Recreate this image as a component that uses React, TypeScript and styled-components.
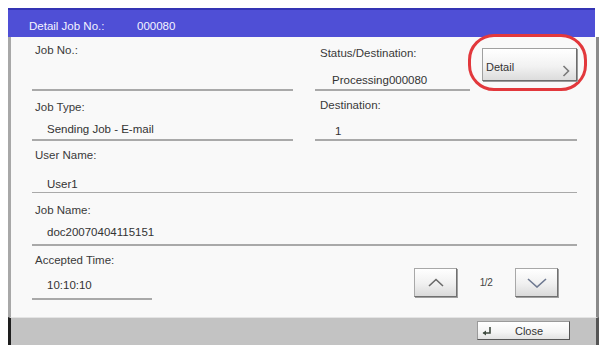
import React from 'react';
import styled, { createGlobalStyle } from 'styled-components';

const GlobalStyle = createGlobalStyle`
  html, body {
    margin: 0;
    padding: 0;
    background: #ffffff;
  }
  body {
    font-family: 'Liberation Sans', Arial, sans-serif;
    font-size: 11.5px;
    color: #3a3a3a;
  }
`;

const Page = styled.div`
  width: 601px;
  height: 345px;
  padding: 8px 2px 0 8px;
  box-sizing: border-box;
  overflow: hidden;
`;

const Frame = styled.div`
  height: 337px;
  display: flex;
  flex-direction: column;
`;

const TitleBar = styled.div`
  height: 22px;
  border-top: 2px solid #3434b4;
  background: #4f4fd6;
  color: #f4f4ff;
  display: flex;
  align-items: center;
  padding: 5px 0 0 21px;
  box-sizing: content-box;
  margin-right: 4px;
`;

const TitleLabel = styled.span`
  width: 108px;
`;

const Body = styled.div`
  flex: 1;
  background: #f9f9f9;
  border-left: 3px solid #a8a8a8;
  border-right: 3px solid #8a8a8a;
  padding: 1px 19px 0 21px;
  display: flex;
  flex-direction: column;
`;

const Row = styled.div`
  display: grid;
  grid-template-columns: 261px 1fr;
  column-gap: 22px;
`;

const FieldBox = styled.div<{ $pt: number; $gap: number; $pb: number; $line: number; $width?: number; $grow?: boolean }>`
  display: flex;
  flex-direction: column;
  padding-top: ${(p) => p.$pt}px;
  padding-bottom: ${(p) => p.$pb}px;
  border-bottom: ${(p) => p.$line}px solid #a9a9a9;
  width: ${(p) => (p.$width ? `${p.$width}px` : 'auto')};
  flex: ${(p) => (p.$grow ? '1' : 'none')};
  row-gap: ${(p) => p.$gap}px;
`;

const Label = styled.div<{ $indent: number }>`
  height: 14px;
  line-height: 14px;
  padding-left: ${(p) => p.$indent}px;
  white-space: nowrap;
`;

const Value = styled.div<{ $indent: number }>`
  height: 14px;
  line-height: 14px;
  padding-left: ${(p) => p.$indent}px;
  color: #333;
  white-space: nowrap;
`;

type FieldProps = {
  label: string;
  value?: string;
  pt: number;
  gap: number;
  pb: number;
  line?: number;
  width?: number;
  grow?: boolean;
  labelIndent?: number;
  valueIndent?: number;
};

function Field({ label, value = '', pt, gap, pb, line = 2, width, grow, labelIndent = 3, valueIndent = 15 }: FieldProps) {
  return (
    <FieldBox $pt={pt} $gap={gap} $pb={pb} $line={line} $width={width} $grow={grow}>
      <Label $indent={labelIndent}>{label}</Label>
      <Value $indent={valueIndent}>{value}</Value>
    </FieldBox>
  );
}

const StatusCell = styled.div`
  display: flex;
  align-items: flex-start;
`;

const DetailWrap = styled.div`
  position: relative;
  margin: 10px 0 0 12px;
`;

const Highlight = styled.div`
  position: absolute;
  left: -14px;
  right: -10px;
  top: -14px;
  bottom: -10px;
  border: 3px solid #e2383c;
  border-radius: 26px;
  pointer-events: none;
`;

const DetailButton = styled.button`
  position: relative;
  width: 95px;
  height: 33px;
  padding: 5px 0 0 3px;
  box-sizing: border-box;
  display: block;
  text-align: left;
  font: inherit;
  font-size: 11px;
  color: #333;
  background: linear-gradient(#ffffff, #f2f2f2 55%, #dcdcdc);
  border: 1px solid #a0a0a0;
  border-right-color: #6c6c6c;
  border-bottom-color: #6c6c6c;
  box-shadow: 1px 1px 0 #9a9a9a;
  svg {
    position: absolute;
    right: 6px;
    bottom: 3px;
  }
`;

const BottomRow = styled.div`
  display: flex;
  align-items: flex-start;
`;

const Pager = styled.div`
  margin: 22px 19px 0 auto;
  display: flex;
  align-items: center;
`;

const PageButton = styled.button`
  width: 43px;
  height: 29px;
  padding: 0;
  display: flex;
  align-items: center;
  justify-content: center;
  background: linear-gradient(#ffffff, #f0f0f0 55%, #dadada);
  border: 1px solid #a8a8a8;
  border-right-color: #707070;
  border-bottom-color: #707070;
  box-shadow: 1px 1px 0 #a0a0a0;
`;

const PageText = styled.span`
  width: 58px;
  text-align: center;
  font-size: 10px;
  letter-spacing: -0.5px;
  color: #444;
`;

const Footer = styled.div`
  height: 28px;
  box-sizing: border-box;
  background: #c3c3c3;
  border-top: 1px solid #e4e4e4;
  border-left: 3px solid #1e1e1e;
  border-right: 3px solid #555;
  display: flex;
  justify-content: flex-end;
  padding: 3px 26px 0 0;
`;

const CloseButton = styled.button`
  width: 93px;
  height: 19px;
  padding: 0 0 0 3px;
  display: flex;
  align-items: center;
  font: inherit;
  font-size: 11px;
  color: #333;
  background: linear-gradient(#ffffff, #f4f4f4 60%, #e2e2e2);
  border: 1px solid #9a9a9a;
  border-right-color: #555;
  border-bottom-color: #555;
  span {
    flex: 1;
    text-align: center;
    padding-right: 4px;
  }
`;

export default function App() {
  return (
    <>
      <GlobalStyle />
      <Page>
        <Frame>
          <TitleBar>
            <TitleLabel>Detail Job No.:</TitleLabel>
            <span>000080</span>
          </TitleBar>
          <Body>
            <Row>
              <Field label="Job No.:" pt={5} gap={17} pb={1} />
              <StatusCell>
                <Field
                  label="Status/Destination:"
                  value="Processing000080"
                  pt={8}
                  gap={13}
                  pb={2}
                  grow
                  labelIndent={5}
                  valueIndent={17}
                />
                <DetailWrap>
                  <Highlight />
                  <DetailButton>
                    Detail
                    <svg width="8" height="12" viewBox="0 0 8 12">
                      <path d="M1.5 1 L6.5 6 L1.5 11" fill="none" stroke="#7a7a7a" strokeWidth="1.6" />
                    </svg>
                  </DetailButton>
                </DetailWrap>
              </StatusCell>
            </Row>
            <Row>
              <Field label="Job Type:" value="Sending Job - E-mail" pt={9} gap={8} pb={3} />
              <Field label="Destination:" value="1" pt={7} gap={12} pb={1} labelIndent={5} valueIndent={20} />
            </Row>
            <Field label="User Name:" value="User1" pt={7} gap={15} pb={1} line={1} />
            <Field label="Job Name:" value="doc20070404115151" pt={10} gap={8} pb={5} line={2} />
            <BottomRow>
              <Field label="Accepted Time:" value="10:10:10" pt={7} gap={11} pb={6} width={120} />
              <Pager>
                <PageButton aria-label="up">
                  <svg width="16" height="9" viewBox="0 0 16 9">
                    <path d="M1 8 L8 1.5 L15 8" fill="none" stroke="#6a6a6a" strokeWidth="1.6" />
                  </svg>
                </PageButton>
                <PageText>1/2</PageText>
                <PageButton aria-label="down">
                  <svg width="20" height="10" viewBox="0 0 20 10">
                    <path d="M1 1 L10 9 L19 1" fill="none" stroke="#6d7890" strokeWidth="1.6" />
                  </svg>
                </PageButton>
              </Pager>
            </BottomRow>
          </Body>
          <Footer>
            <CloseButton>
              <svg width="12" height="10" viewBox="0 0 12 10">
                <path d="M9 1 V7 H2.5" fill="none" stroke="#3f4a3f" strokeWidth="1.6" />
                <path d="M5 4.5 L1.5 7 L5 9.5 Z" fill="#3f4a3f" />
              </svg>
              <span>Close</span>
            </CloseButton>
          </Footer>
        </Frame>
      </Page>
    </>
  );
}
